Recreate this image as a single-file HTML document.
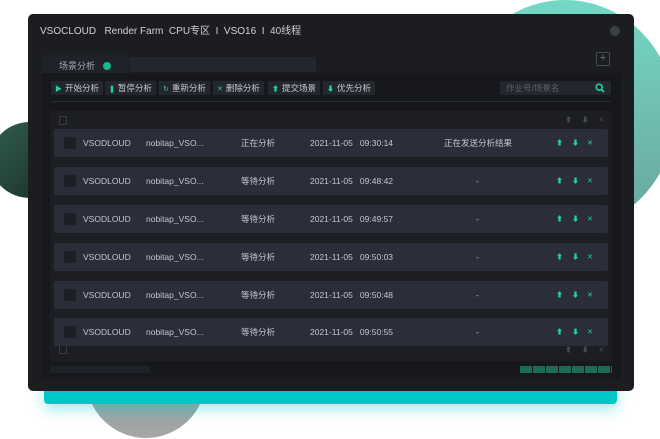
<!DOCTYPE html>
<html><head><meta charset="utf-8"><style>
*{margin:0;padding:0;box-sizing:border-box}
body{width:660px;height:439px;background:#fff;position:relative;overflow:hidden;font-family:"Liberation Sans","Noto Sans CJK SC",sans-serif}
.a{position:absolute}
.t{color:#c9cad0;font-size:9px;white-space:nowrap;line-height:12px}
.row{position:absolute;left:54px;width:554px;height:28px;background:#2b2e39;border-radius:2px}
.row .cb{position:absolute;left:10px;top:8px;width:12px;height:12px;background:#1d1f26;border-radius:1px}
.row span{position:absolute;top:8px;font-size:8.5px;color:#c5c7ce;white-space:nowrap;line-height:12px}
.row span.ic{color:#1fd1a5;font-size:7px;top:9px}
.ic{color:#1fd1a5;font-size:8px}
.btn{position:absolute;top:81px;height:14px;background:#24262d;color:#c9cad0;font-size:8.5px;line-height:14px;padding:0 4px;white-space:nowrap}
.btn b{color:#1fd1a5;font-weight:normal;margin-right:3px;font-size:7px}
</style></head><body>
<div class="a" style="left:455px;top:0px;width:220px;height:230px;border-radius:50%;background:linear-gradient(#74d8c5,#6aa39c)"></div>
<div class="a" style="left:-10px;top:122px;width:80px;height:76px;border-radius:50%;background:linear-gradient(135deg,#2e5f4e,#1b2a26)"></div>
<div class="a" style="left:86px;top:318px;width:120px;height:120px;border-radius:50%;background:linear-gradient(#6aa39c,#a6a6a6)"></div>
<div class="a" style="left:44px;top:380px;width:573px;height:24px;background:#00c6c6;border-radius:0 0 4px 4px;box-shadow:0 6px 14px rgba(0,198,198,.35)"></div>
<div class="a" style="left:28px;top:14px;width:606px;height:377px;background:#1c1d21;border-radius:5px"></div>
<div class="a t" style="left:40px;top:25px;font-size:10px;color:#d0d1d6;line-height:14px">VSOCLOUD&nbsp;&nbsp; Render Farm&nbsp; CPU专区&nbsp; I&nbsp; VSO16&nbsp; I&nbsp; 40线程</div>
<div class="a" style="left:610px;top:26px;width:10px;height:10px;border-radius:50%;background:#3e4048"></div>
<div class="a" style="left:596px;top:52px;width:14px;height:14px;border:1px solid #4a4c54;border-radius:2px;color:#6a6c74;font-size:11px;line-height:11px;text-align:center">+</div>
<div class="a" style="left:42px;top:55px;width:87px;height:19px;background:#202229;border-radius:3px 3px 0 0"></div>
<div class="a t" style="left:59px;top:60px;color:#a9abb2">场景分析</div>
<div class="a" style="left:103px;top:62px;width:8px;height:8px;border-radius:50%;background:#17b890"></div>
<div class="a" style="left:130px;top:57px;width:186px;height:15px;background:#24262d;border-radius:2px"></div>
<div class="a" style="left:42px;top:73px;width:579px;height:306px;background:#17181c"></div>
<div class="btn" style="left:51px"><b>▶</b>开始分析</div>
<div class="btn" style="left:105px"><b>❚</b>暂停分析</div>
<div class="btn" style="left:159px"><b>↻</b>重新分析</div>
<div class="btn" style="left:213px"><b>✕</b>删除分析</div>
<div class="btn" style="left:268px"><b>⬆</b>提交场景</div>
<div class="btn" style="left:323px"><b>⬇</b>优先分析</div>
<div class="a" style="left:500px;top:81px;width:111px;height:14px;background:#24262d"></div>
<div class="a t" style="left:506px;top:82px;color:#5f6169;font-size:8.5px">作业号/场景名</div>
<svg class="a" style="left:595px;top:83px" width="10" height="10" viewBox="0 0 10 10"><circle cx="4.2" cy="4.2" r="3" fill="none" stroke="#1fd1a5" stroke-width="1.6"/><path d="M6.3 6.3L9 9" stroke="#1fd1a5" stroke-width="1.8"/></svg>
<div class="a" style="left:51px;top:101px;width:560px;height:1px;background:#2a2c33"></div>
<div class="a" style="left:50px;top:111px;width:562px;height:250px;background:#1c1e24"></div>
<div class="a" style="left:59px;top:116px;width:8px;height:9px;border:1px solid #3a3c44"></div>
<div class="a t" style="left:565px;top:115px;color:#4a4c54;font-size:7px">⬆&nbsp;&nbsp;&nbsp;&nbsp;&nbsp;⬇&nbsp;&nbsp;&nbsp;&nbsp;&nbsp;✕</div>
<div class="a" style="left:59px;top:345px;width:8px;height:9px;border:1px solid #3a3c44"></div>
<div class="a t" style="left:565px;top:345px;color:#4a4c54;font-size:7px">⬆&nbsp;&nbsp;&nbsp;&nbsp;&nbsp;⬇&nbsp;&nbsp;&nbsp;&nbsp;&nbsp;✕</div>

<div class="row" style="top:129px"><div class="cb"></div><span style="left:29px">VSODLOUD</span><span style="left:92px">nobitap_VSO...</span><span style="left:187px">正在分析</span><span style="left:256px">2021-11-05&nbsp;&nbsp; 09:30:14</span><span style="left:390px">正在发送分析结果</span><span class="ic" style="left:502px">⬆</span><span class="ic" style="left:518px">⬇</span><span class="ic" style="left:533px">✕</span></div>
<div class="row" style="top:167px"><div class="cb"></div><span style="left:29px">VSODLOUD</span><span style="left:92px">nobitap_VSO...</span><span style="left:187px">等待分析</span><span style="left:256px">2021-11-05&nbsp;&nbsp; 09:48:42</span><span style="left:422px">-</span><span class="ic" style="left:502px">⬆</span><span class="ic" style="left:518px">⬇</span><span class="ic" style="left:533px">✕</span></div>
<div class="row" style="top:205px"><div class="cb"></div><span style="left:29px">VSODLOUD</span><span style="left:92px">nobitap_VSO...</span><span style="left:187px">等待分析</span><span style="left:256px">2021-11-05&nbsp;&nbsp; 09:49:57</span><span style="left:422px">-</span><span class="ic" style="left:502px">⬆</span><span class="ic" style="left:518px">⬇</span><span class="ic" style="left:533px">✕</span></div>
<div class="row" style="top:243px"><div class="cb"></div><span style="left:29px">VSODLOUD</span><span style="left:92px">nobitap_VSO...</span><span style="left:187px">等待分析</span><span style="left:256px">2021-11-05&nbsp;&nbsp; 09:50:03</span><span style="left:422px">-</span><span class="ic" style="left:502px">⬆</span><span class="ic" style="left:518px">⬇</span><span class="ic" style="left:533px">✕</span></div>
<div class="row" style="top:281px"><div class="cb"></div><span style="left:29px">VSODLOUD</span><span style="left:92px">nobitap_VSO...</span><span style="left:187px">等待分析</span><span style="left:256px">2021-11-05&nbsp;&nbsp; 09:50:48</span><span style="left:422px">-</span><span class="ic" style="left:502px">⬆</span><span class="ic" style="left:518px">⬇</span><span class="ic" style="left:533px">✕</span></div>
<div class="row" style="top:318px"><div class="cb"></div><span style="left:29px">VSODLOUD</span><span style="left:92px">nobitap_VSO...</span><span style="left:187px">等待分析</span><span style="left:256px">2021-11-05&nbsp;&nbsp; 09:50:55</span><span style="left:422px">-</span><span class="ic" style="left:502px">⬆</span><span class="ic" style="left:518px">⬇</span><span class="ic" style="left:533px">✕</span></div>

<div class="a" style="left:50px;top:366px;width:100px;height:7px;background:#202229"></div>
<div class="a" style="left:520px;top:366px;width:92px;height:7px;background:repeating-linear-gradient(90deg,#1d6b55 0 12px,#17181c 12px 13px)"></div>
</body></html>
